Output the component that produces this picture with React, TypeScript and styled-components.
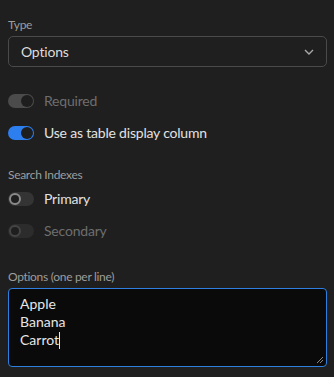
import styled, { createGlobalStyle } from "styled-components";

const GlobalStyle = createGlobalStyle`
  body {
    margin: 0;
    background: #1f1f1f;
    font-family: "Lato", "Noto Sans", sans-serif;
  }
`;

const Panel = styled.div`
  padding: 17px 7px 8px 8px;
  display: flex;
  flex-direction: column;
`;

const Label = styled.div<{ $gap: number }>`
  font-size: 12px;
  letter-spacing: -0.3px;
  line-height: 16px;
  color: #9d9d9d;
  margin-top: ${(p) => p.$gap}px;
  margin-bottom: 3px;
`;

const Select = styled.div`
  height: 29px;
  border: 1px solid #4a4a4a;
  border-radius: 5px;
  display: flex;
  align-items: center;
  justify-content: space-between;
  padding: 0 12px;
  font-size: 14px;
  letter-spacing: -0.2px;
  color: #dcdcdc;
`;

const ToggleRow = styled.div<{ $gap: number; $tone: "on" | "dim" }>`
  display: flex;
  align-items: center;
  gap: 10px;
  height: 14px;
  margin-top: ${(p) => p.$gap}px;
  font-size: 14px;
  letter-spacing: -0.2px;
  line-height: 14px;
  color: ${(p) => (p.$tone === "on" ? "#e2e2e2" : "#6e6e6e")};
`;

const Track = styled.span<{ $checked: boolean; $variant: "blue" | "grey" | "off" | "offDim" }>`
  position: relative;
  width: 26px;
  height: 14px;
  border-radius: 7px;
  flex-shrink: 0;
  background: ${(p) =>
    p.$variant === "blue"
      ? "#2d7ff0"
      : p.$variant === "grey"
      ? "#4b4b4b"
      : p.$variant === "off"
      ? "#343434"
      : "#2c2c2c"};

  &::after {
    content: "";
    position: absolute;
    top: 1px;
    left: ${(p) => (p.$checked ? "13px" : "1px")};
    width: 12px;
    height: 12px;
    box-sizing: border-box;
    border-radius: 50%;
    background: #1e1e1e;
    border: ${(p) =>
      p.$variant === "off" ? "2px solid #8a8a8a" : p.$variant === "offDim" ? "2px solid #444" : "none"};
  }
`;

const TextBox = styled.div`
  position: relative;
  height: 65px;
  border: 1px solid #2f7fe0;
  border-radius: 4px;
  background: #0a0a0a;
  padding: 6px 11px;
  font-size: 14px;
  line-height: 18px;
  color: #e6e6e6;
`;

const Caret = styled.span`
  display: inline-block;
  width: 1px;
  height: 17px;
  background: #e6e6e6;
  vertical-align: -4px;
`;

const Grip = styled.svg`
  position: absolute;
  right: 2px;
  bottom: 2px;
`;

export default function App() {
  return (
    <>
      <GlobalStyle />
      <Panel>
        <Label $gap={0}>Type</Label>
        <Select>
          <span>Options</span>
          <svg width="10" height="6" viewBox="0 0 10 6">
            <path d="M1 1l4 4 4-4" fill="none" stroke="#a8a8a8" strokeWidth="1.4" />
          </svg>
        </Select>

        <ToggleRow $gap={27} $tone="dim">
          <Track $checked $variant="grey" />
          Required
        </ToggleRow>
        <ToggleRow $gap={18} $tone="on">
          <Track $checked $variant="blue" />
          Use as table display column
        </ToggleRow>

        <Label $gap={27}>Search Indexes</Label>
        <ToggleRow $gap={6} $tone="on">
          <Track $checked={false} $variant="off" />
          Primary
        </ToggleRow>
        <ToggleRow $gap={18} $tone="dim">
          <Track $checked={false} $variant="offDim" />
          Secondary
        </ToggleRow>

        <Label $gap={31}>Options (one per line)</Label>
        <TextBox>
          Apple
          <br />
          Banana
          <br />
          Carrot
          <Caret />
          <Grip width="8" height="8" viewBox="0 0 8 8">
            <path d="M7 1L1 7M7 4L4 7" stroke="#888" strokeWidth="1" />
          </Grip>
        </TextBox>
      </Panel>
    </>
  );
}
